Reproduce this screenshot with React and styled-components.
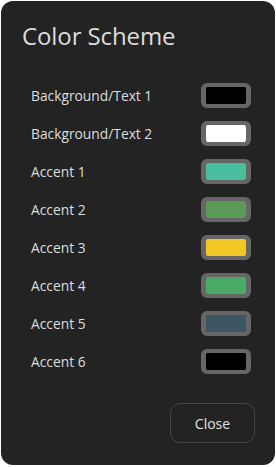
import React from 'react'
import styled, { createGlobalStyle } from 'styled-components'

const GlobalStyle = createGlobalStyle`
  html, body {
    margin: 0;
    padding: 0;
    background: #fff;
  }
  body {
    font-family: 'Open Sans', 'Noto Sans', sans-serif;
  }
`

const colors = [
    { label: 'Background/Text 1', color: '#000000' },
    { label: 'Background/Text 2', color: '#ffffff' },
    { label: 'Accent 1', color: '#48bf9e' },
    { label: 'Accent 2', color: '#5a9b57' },
    { label: 'Accent 3', color: '#f3c726' },
    { label: 'Accent 4', color: '#4baa65' },
    { label: 'Accent 5', color: '#3e5566' },
    { label: 'Accent 6', color: '#000000' },
]

export default function App() {
    return (
        <>
            <GlobalStyle />
            <Panel>
                <Title>Color Scheme</Title>
                <List>
                    {colors.map((c) => (
                        <Row key={c.label}>
                            <Label>{c.label}</Label>
                            <Swatch $color={c.color} />
                        </Row>
                    ))}
                </List>
                <Footer>
                    <CloseButton>Close</CloseButton>
                </Footer>
            </Panel>
        </>
    )
}

const Panel = styled.div`
  box-sizing: border-box;
  margin: 1px;
  width: 274px;
  height: 464px;
  background: #232323;
  border-radius: 12px;
  padding: 19px 20px 0 21px;
  display: flex;
  flex-direction: column;
`

const Title = styled.h1`
  margin: 0;
  font-size: 24px;
  font-weight: 400;
  color: #dcdcdc;
  line-height: 32px;
  letter-spacing: -0.1px;
`

const List = styled.div`
  margin-top: 31px;
  padding-left: 9px;
  padding-right: 4px;
  display: flex;
  flex-direction: column;
  gap: 13px;
`

const Row = styled.div`
  display: flex;
  align-items: center;
  justify-content: space-between;
  height: 25px;
`

const Label = styled.span`
  font-size: 13.8px;
  color: #dedede;
`

const Swatch = styled.div`
  box-sizing: border-box;
  width: 50px;
  height: 25px;
  border: 4px solid #666;
  border-left-width: 5px;
  border-right-width: 5px;
  border-radius: 6px;
  background: ${(p) => p.$color};
  background-clip: padding-box;
`

const Footer = styled.div`
  margin-top: 29px;
  display: flex;
  justify-content: flex-end;
`

const CloseButton = styled.button`
  box-sizing: border-box;
  width: 85px;
  height: 40px;
  background: transparent;
  border: 1px solid #464646;
  border-radius: 10px;
  color: #e2e2e2;
  font-family: 'Open Sans', 'Noto Sans', sans-serif;
  font-size: 14px;
`
